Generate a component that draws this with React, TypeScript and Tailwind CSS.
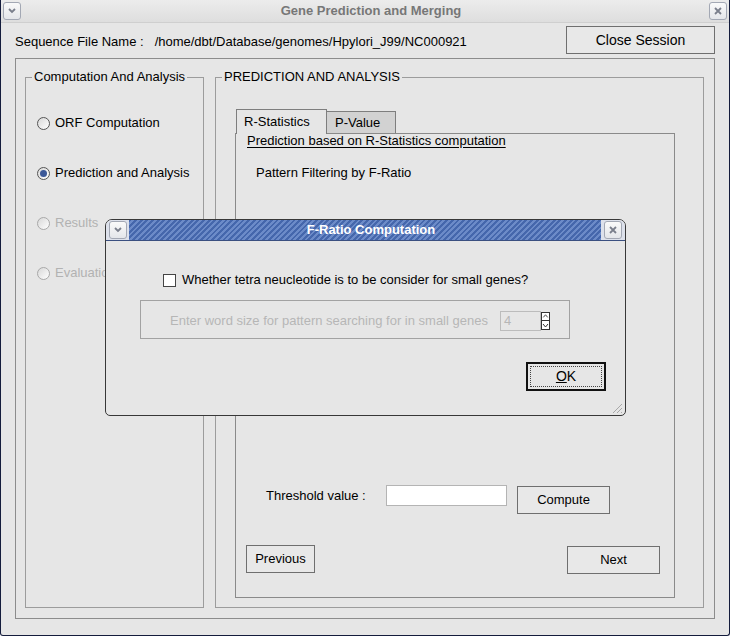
import React from 'react'

const font = { fontFamily: '"Liberation Sans", Arial, sans-serif' }

function Chevron() {
    return (
        <svg width="10" height="8" viewBox="0 0 10 8">
            <polyline points="2,2 5,5 8,2" fill="none" stroke="#7a7f8c" strokeWidth="1.8" />
        </svg>
    )
}

function Cross() {
    return (
        <svg width="10" height="10" viewBox="0 0 10 10">
            <path d="M2 2 L8 8 M8 2 L2 8" stroke="#7a7f8c" strokeWidth="1.8" />
        </svg>
    )
}

function TitleButton({ children }: { children: React.ReactNode }) {
    return (
        <div className="w-[18px] h-[18px] rounded-[3px] border border-[#a3a8b4] bg-gradient-to-b from-[#fafafa] to-[#e4e6ea] flex items-center justify-center">
            {children}
        </div>
    )
}

function Radio({ label, checked, disabled }: { label: string; checked?: boolean; disabled?: boolean }) {
    return (
        <div className="flex items-center h-[20px] ml-[11px]">
            <div
                className={
                    'w-[13px] h-[13px] rounded-full border flex items-center justify-center bg-gradient-to-br from-[#d8d8d8] to-white ' +
                    (disabled ? 'border-[#a8a8a8]' : 'border-[#555]')
                }
            >
                {checked && <div className="w-[7px] h-[7px] rounded-full bg-[#3b5898]" />}
            </div>
            <span className={'ml-[5px] text-[13px] whitespace-nowrap ' + (disabled ? 'text-[#b2b2b2]' : 'text-black')}>{label}</span>
        </div>
    )
}

function Button({ label, className }: { label: string; className: string }) {
    return (
        <div className={'border border-[#6f6f6f] bg-[#e8e8e8] flex items-center justify-center text-[13px] text-black ' + className}>
            {label}
        </div>
    )
}

const App = () => {
    return (
        <div style={font} className="relative w-[730px] h-[636px] bg-[#e6e6e6] border-x border-b border-[#141c3c] rounded-b-[3px] overflow-hidden flex flex-col">
            {/* window title */}
            <div className="h-[23px] flex items-center justify-between px-[2px] bg-gradient-to-b from-[#ececec] to-[#dedede] border-b border-[#cfcfcf]">
                <TitleButton><Chevron /></TitleButton>
                <span className="pl-[12px] text-[13px] font-bold text-[#777]">Gene Prediction and Merging</span>
                <TitleButton><Cross /></TitleButton>
            </div>

            <div className="h-[35px] flex items-start justify-between pl-[14px] pr-[14px]">
                <div className="mt-[11px] text-[13px] text-black leading-[15px] whitespace-nowrap">
                    <span>Sequence File Name :</span>
                    <span className="ml-[11px]">/home/dbt/Database/genomes/Hpylori_J99/NC000921</span>
                </div>
                <Button label="Close Session" className="mt-[3px] w-[149px] h-[28px] text-[14px]" />
            </div>

            <div className="ml-[14px] w-[700px] h-[561px] border border-[#8c8c8c] flex pl-[9px] pt-[10px] gap-[11px]">
                <fieldset className="w-[179px] h-[539px] border border-[#9c9c9c] flex flex-col">
                    <legend className="ml-[6px] px-[2px] text-[13px] leading-[16px] text-black">Computation And Analysis</legend>
                    <div className="mt-[28px] flex flex-col gap-[30px]">
                        <Radio label="ORF Computation" />
                        <Radio label="Prediction and Analysis" checked />
                        <Radio label="Results" disabled />
                        <Radio label="Evaluation" disabled />
                    </div>
                </fieldset>

                <fieldset className="w-[489px] h-[539px] border border-[#9c9c9c]">
                    <legend className="ml-[6px] px-[2px] text-[13px] leading-[16px] text-black">PREDICTION AND ANALYSIS</legend>
                    <div className="mt-[24px] ml-[19px] w-[440px]">
                        <div className="flex items-end pl-[1px]">
                            <div className="relative z-10 -mb-px w-[91px] h-[25px] border-x border-t border-[#7e7e7e] bg-[#e6e6e6] text-[13px] pl-[7px] pt-[4px] leading-[16px]">
                                R-Statistics
                            </div>
                            <div className="w-[69px] h-[22px] border-t border-r border-[#7e7e7e] bg-[#d2d2d2] text-[13px] pl-[8px] pt-[3px] leading-[16px]">
                                P-Value
                            </div>
                        </div>
                        <div className="h-[465px] border border-[#8a8a8a] flex flex-col">
                            <span className="pl-[11px] text-[13px] leading-[14px] underline underline-offset-2">Prediction based on R-Statistics computation</span>
                            <span className="pl-[20px] mt-[18px] text-[13px] leading-[14px]">Pattern Filtering by F-Ratio</span>
                            <div className="mt-[305px] flex items-start pl-[30px]">
                                <span className="mt-[4px] w-[120px] text-[13px] leading-[14px]">Threshold value :</span>
                                <div className="w-[121px] h-[21px] bg-white border border-[#b4b4b4]" />
                                <Button label="Compute" className="ml-[10px] mt-[1px] w-[93px] h-[28px]" />
                            </div>
                            <div className="mt-[31px] flex items-start justify-between pl-[10px] pr-[14px]">
                                <Button label="Previous" className="w-[69px] h-[28px]" />
                                <Button label="Next" className="mt-[1px] w-[93px] h-[28px]" />
                            </div>
                        </div>
                    </div>
                </fieldset>
            </div>

            {/* modal dialog */}
            <div className="absolute left-[104px] top-[219px] w-[521px] h-[197px] border border-[#383838] rounded-t-[7px] rounded-b-[5px] bg-[#e6e6e6] overflow-hidden flex flex-col">
                <div className="h-[21px] flex border-b border-[#3a4f80]">
                    <div className="w-[23px] bg-[#dde1eb] flex items-center justify-center"><TitleButton><Chevron /></TitleButton></div>
                    <div className="flex-1 bg-[repeating-linear-gradient(135deg,#4567ac_0px,#4567ac_2px,#6c8bc8_2px,#6c8bc8_4px)] flex items-center justify-center pl-[12px]">
                        <span className="text-[13px] font-bold text-white">F-Ratio Computation</span>
                    </div>
                    <div className="w-[24px] bg-[#dde1eb] flex items-center justify-center"><TitleButton><Cross /></TitleButton></div>
                </div>
                <div className="mt-[31px] ml-[57px] flex items-center h-[16px]">
                    <div className="w-[13px] h-[13px] border border-[#444] bg-white" />
                    <span className="ml-[6px] text-[13px] text-black whitespace-nowrap">Whether tetra neucleotide is to be consider for small genes?</span>
                </div>
                <div className="mt-[12px] ml-[34px] w-[430px] h-[39px] border border-[#a2a2a2] flex items-center pl-[29px] pt-[2px]">
                    <span className="text-[13px] text-[#b6b6b6] whitespace-nowrap">Enter word size for pattern searching for in small genes</span>
                    <div className="ml-[12px] w-[41px] h-[20px] border border-[#bcbcbc] text-[13px] text-[#b6b6b6] pl-[3px] leading-[18px]">4</div>
                    <div className="w-[9px] h-[18px] flex flex-col border border-[#333] bg-white">
                        <svg width="7" height="8" viewBox="0 0 7 8" className="border-b border-[#333]">
                            <path d="M1 5 L3.5 2 L6 5" fill="none" stroke="#333" strokeWidth="1" />
                        </svg>
                        <svg width="7" height="8" viewBox="0 0 7 8">
                            <path d="M1 3 L3.5 6 L6 3" fill="none" stroke="#333" strokeWidth="1" />
                        </svg>
                    </div>
                </div>
                <div className="mt-[23px] ml-[420px] w-[80px] h-[29px] border-2 border-[#111] p-[2px]">
                    <div className="w-full h-full border border-dotted border-[#444] flex items-center justify-center text-[14px] text-black">
                        <span><span className="underline">O</span>K</span>
                    </div>
                </div>
                <div className="flex-1 flex items-end justify-end pr-[2px] pb-[1px]">
                    <svg width="12" height="12" viewBox="0 0 12 12">
                        <path d="M11 2 L2 11 M11 6 L6 11 M11 10 L10 11" stroke="#a8a8a8" strokeWidth="1" />
                    </svg>
                </div>
            </div>
        </div>
    )
}

export default App
